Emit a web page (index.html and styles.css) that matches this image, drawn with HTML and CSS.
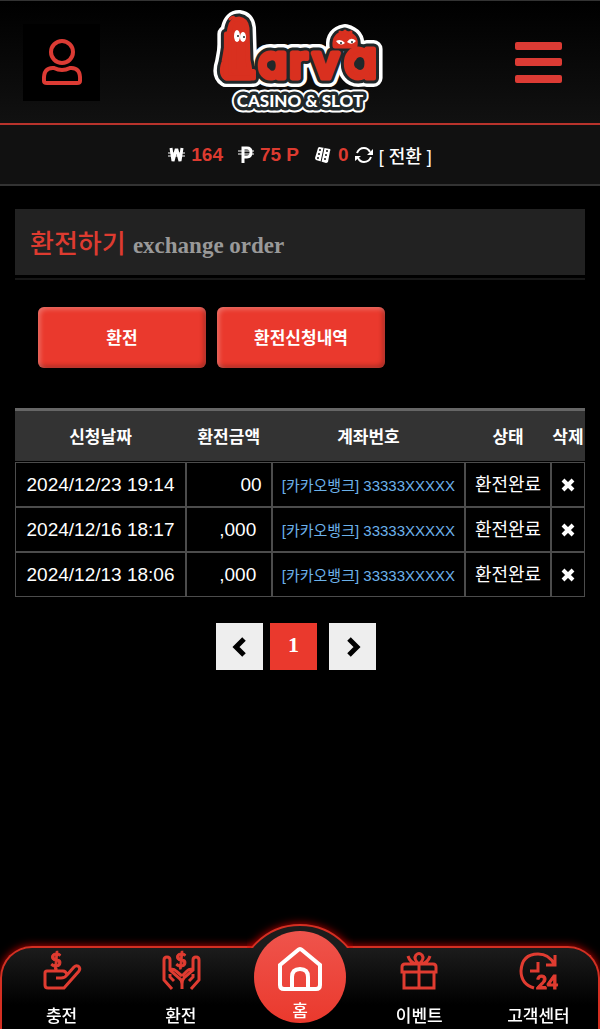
FILE: index.html
```
<!DOCTYPE html>
<html lang="ko">
<head>
    <meta charset="UTF-8">
    <meta name="viewport" content="width=device-width, initial-scale=1.0">
    <title>환전하기</title>
    <link rel="stylesheet" href="styles.css">
</head>
<body>

<header class="header">
    <a href="#" class="user-link" aria-label="내 정보">
        <svg width="42" height="48" viewBox="0 0 42 48">
            <circle cx="21" cy="14" r="11"/>
            <path d="M13 30 Q21 34 29 30 Q40 29 39 43 Q39 45 36 45 H6 Q3 45 3 43 Q2 29 13 30 Z"/>
        </svg>
    </a>
    <a href="#" class="logo">
        <svg width="172" height="110" viewBox="214 7 172 110">
            <g class="logo-white">
                <use href="#logo-word"/>
                <use href="#worm"/>
                <use href="#head"/>
            </g>
            <g class="logo-dark">
                <use href="#logo-word"/>
                <use href="#worm"/>
                <use href="#head"/>
            </g>
            <g class="logo-red">
                <path id="head" d="M335 46 Q334 35 345 33 Q357 36 355 46 Z"/>
                <path id="worm" d="M226 78 Q220 74 224 62 L230 28 Q232 19 239 19 Q246 20 247 28 L248 60 Q251 74 250 78 Z"/>
            </g>
            <g class="logo-red">
                <text id="logo-word" class="word" y="78"><tspan class="big-l" x="222">L</tspan><tspan x="258">a</tspan><tspan x="289">r</tspan><tspan x="312">v</tspan><tspan class="big-a" x="344">a</tspan></text>
            </g>
            <path class="antenna" d="M235 20 Q234 15 230 19"/>
            <path class="antenna" d="M345 33 V31 M342 33 L340 32 M349 33 L351 32"/>
            <ellipse class="eye" cx="237" cy="36" rx="3" ry="6"/>
            <ellipse class="eye" cx="243" cy="37" rx="3" ry="5"/>
            <circle class="pupil" cx="238" cy="36" r="1"/>
            <circle class="pupil" cx="244" cy="37" r="1"/>
            <path class="eye" d="M336 41 Q341 38 345 43 Q340 47 336 41 Z M347 42 Q351 36 356 41 Q352 46 347 42 Z"/>
            <circle class="pupil" cx="341" cy="43" r="1"/>
            <circle class="pupil" cx="352" cy="42" r="1"/>
            <circle class="pupil" cx="271" cy="65" r="4"/>
            <circle class="pupil" cx="359" cy="64" r="5"/>
            <use href="#logo-sub" class="sub-white"/>
            <use href="#logo-sub" class="sub-dark"/>
            <g class="sub-text">
                <text id="logo-sub" class="sub" x="300" y="107">CASINO &amp; SLOT</text>
            </g>
        </svg>
    </a>
    <button type="button" class="menu-icon" aria-label="메뉴">
        <span></span>
        <span></span>
        <span></span>
    </button>
</header>

<div class="balance">
    <svg class="won" width="17" height="18" viewBox="0 0 17 18"><path d="M3 2 L5 15 L8 4 H9 L12 15 L14 2"/><path class="bar" d="M0 7 H17 M0 10 H17"/></svg>
    <strong>164</strong>
    <svg class="point" width="16" height="18" viewBox="0 0 16 18"><path d="M5 17 V2 H9 Q13 2 13 6 Q13 11 9 11 H5"/><path class="bar" d="M0 5 H16 M0 8 H16"/></svg>
    <strong>75 P</strong>
    <svg class="dice" width="18" height="18" viewBox="0 0 18 18">
        <path d="M5 1 L16 3 Q17 4 16 5 L14 16 Q13 17 12 17 L2 14 Q1 13 1 12 L4 2 Z"/>
        <path class="dice-line" d="M10 2 L7 16"/>
        <g class="dots">
            <circle cx="6" cy="4" r="1"/><circle cx="5" cy="8" r="1"/><circle cx="4" cy="12" r="1"/>
            <circle cx="13" cy="5" r="1"/><circle cx="12" cy="9" r="1"/><circle cx="11" cy="13" r="1"/>
        </g>
    </svg>
    <strong>0</strong>
    <svg class="refresh" width="18" height="18" viewBox="0 0 18 18">
        <path d="M2 7 Q4 2 9 2 Q13 2 15 6 M16 11 Q14 16 9 16 Q5 16 3 12"/>
        <path class="tips" d="M18 3 V9 H12 Z M0 15 V10 H6 Z"/>
    </svg>
    <a href="#">[ 전환 ]</a>
</div>

<main class="content">
    <div class="title">
        <h1>환전하기 <small>exchange order</small></h1>
    </div>

    <div class="tabs">
        <button type="button">환전</button>
        <button type="button">환전신청내역</button>
    </div>

    <table class="list">
        <thead>
            <tr>
                <th class="col-date">신청날짜</th>
                <th class="col-amount">환전금액</th>
                <th class="col-account">계좌번호</th>
                <th class="col-state">상태</th>
                <th class="col-delete">삭제</th>
            </tr>
        </thead>
        <tbody>
            <tr>
                <td>2024/12/23 19:14</td>
                <td class="amount">00</td>
                <td class="account">[카카오뱅크] 33333XXXXX</td>
                <td class="state">환전완료</td>
                <td><button type="button" class="delete" aria-label="삭제"><svg width="14" height="14" viewBox="0 0 14 14"><path d="M2 2 L12 12 M12 2 L2 12"/></svg></button></td>
            </tr>
            <tr>
                <td>2024/12/16 18:17</td>
                <td class="amount">,000&nbsp;</td>
                <td class="account">[카카오뱅크] 33333XXXXX</td>
                <td class="state">환전완료</td>
                <td><button type="button" class="delete" aria-label="삭제"><svg width="14" height="14" viewBox="0 0 14 14"><path d="M2 2 L12 12 M12 2 L2 12"/></svg></button></td>
            </tr>
            <tr>
                <td>2024/12/13 18:06</td>
                <td class="amount">,000&nbsp;</td>
                <td class="account">[카카오뱅크] 33333XXXXX</td>
                <td class="state">환전완료</td>
                <td><button type="button" class="delete" aria-label="삭제"><svg width="14" height="14" viewBox="0 0 14 14"><path d="M2 2 L12 12 M12 2 L2 12"/></svg></button></td>
            </tr>
        </tbody>
    </table>

    <div class="paging">
        <a href="#" aria-label="이전"><svg width="14" height="20" viewBox="0 0 14 20"><path d="M11 2 L3 10 L11 18"/></svg></a>
        <a href="#" class="active">1</a>
        <a href="#" class="next" aria-label="다음"><svg width="14" height="20" viewBox="0 0 14 20"><path d="M3 2 L11 10 L3 18"/></svg></a>
    </div>
</main>

<nav class="bottom-nav">
    <a href="#">
        <svg width="38" height="38" viewBox="0 0 38 38">
            <path d="M13 26 H18 Q22 26 24 23 L31 15 Q33 13 35 14 Q38 16 36 19 L21 36 H5 Q2 36 2 33 V21 Q2 19 4 19 H20 Q23 19 24 23 M13 16 V19"/>
            <text x="13" y="15">$</text>
        </svg>
        <span>충전</span>
    </a>
    <a href="#">
        <svg width="38" height="38" viewBox="0 0 38 38">
            <path d="M10 37 L2 28 V8 Q2 5 5 5 Q8 5 8 8 V18 L17 26 Q20 28 20 32 V37 M8 22 V25 L12 29 M8 18 Q11 16 14 19 L20 24 M29 37 L37 28 V8 Q37 5 34 5 Q31 5 31 8 V18 L22 26 Q20 28 20 32 M31 22 V25 L27 29 M31 18 Q28 16 25 19 L20 24"/>
            <text x="19" y="15">$</text>
        </svg>
        <span>환전</span>
    </a>
    <a href="#" class="home">
        <span class="home-circle">
            <svg width="44" height="44" viewBox="0 0 44 44">
                <path d="M2 18 L20 3 Q22 1 24 3 L42 18 V38 Q42 42 38 42 H6 Q2 42 2 38 Z M14 42 V30 Q14 22 22 22 Q30 22 30 30 V42"/>
            </svg>
            <span>홈</span>
        </span>
    </a>
    <a href="#">
        <svg width="38" height="38" viewBox="0 0 38 38">
            <path d="M4 20 V36 H34 V20 M19 12 V36 M5 12 H33 Q36 12 36 15 V20 H2 V15 Q2 12 5 12 Z M17 12 Q10 11 8 4 M21 12 Q28 11 30 4 M19 12 Q13 7 16 3 Q19 0 22 3 Q25 7 19 12"/>
        </svg>
        <span>이벤트</span>
    </a>
    <a href="#">
        <svg width="38" height="38" viewBox="0 0 38 38">
            <path d="M15 36 Q2 32 2 19 Q3 2 19 2 Q30 2 35 12 M27 13 H36 V3 M19 10 V19 H11"/>
            <text x="28" y="37">24</text>
        </svg>
        <span>고객센터</span>
    </a>
</nav>

</body>
</html>
```
FILE: styles.css
```
* {
    box-sizing: border-box;
}
body {
    margin: 0;
    font-family: "Liberation Sans", "Noto Sans CJK KR", sans-serif;
    background-color: #000;
    color: #fff;
    min-height: 100vh;
    padding-bottom: 110px;
}
a {
    color: inherit;
    text-decoration: none;
}
button {
    border: 0;
    padding: 0;
    background: none;
    color: inherit;
    font-family: inherit;
    cursor: pointer;
}
svg {
    display: block;
    fill: none;
    overflow: visible;
}
.header {
    display: grid;
    grid-template-columns: 1fr auto 1fr;
    align-items: center;
    height: 125px;
    padding: 0 23px;
    background: linear-gradient(#000, #111);
    border-top: 1px solid #333;
    border-bottom: 2px solid #b8332c;
}
.user-link {
    display: flex;
    align-items: center;
    justify-content: center;
    width: 77px;
    height: 77px;
    background-color: #000;
}
.user-link svg {
    stroke: #dc3b34;
    stroke-width: 4;
}
.menu-icon {
    display: flex;
    flex-direction: column;
    justify-content: space-between;
    justify-self: end;
    width: 47px;
    height: 41px;
    margin-right: 15px;
}
.menu-icon span {
    height: 8px;
    border-radius: 2px;
    background-color: #dc3b34;
}

/* logo */
.word {
    font-family: Inter, sans-serif;
    font-size: 46px;
    font-weight: 600;
    font-feature-settings: "cv11";
}
.big-l {
    font-size: 60px;
}
.big-a {
    font-size: 53px;
}
.sub {
    font-family: "Liberation Sans Narrow", Lato, sans-serif;
    font-size: 17px;
    font-weight: 900;
    text-anchor: middle;
}
.logo svg {
    stroke-linejoin: round;
    stroke-linecap: round;
}
.logo-white {
    fill: #fff;
    stroke: #fff;
    stroke-width: 18;
}
.logo-dark {
    fill: #20282a;
    stroke: #20282a;
    stroke-width: 11;
}
.logo-red {
    fill: #d9301f;
    stroke: #d9301f;
    stroke-width: 5;
}
.antenna {
    stroke: #d9301f;
    stroke-width: 3;
}
.eye {
    fill: #fff;
}
.pupil {
    fill: #20282a;
}
.sub-white {
    fill: #fff;
    stroke: #fff;
    stroke-width: 11;
}
.sub-dark {
    fill: #20282a;
    stroke: #20282a;
    stroke-width: 7;
}
.sub-text {
    fill: #fff;
}

.balance {
    display: flex;
    align-items: center;
    justify-content: center;
    gap: 6px;
    height: 61px;
    background-color: #111;
    border-bottom: 2px solid #333;
    font-size: 19px;
}
.balance strong {
    color: #dd3b30;
}
.balance a {
    font-size: 18px;
    font-weight: 500;
}
.balance svg {
    stroke: #fff;
    stroke-width: 2;
}
.balance .won,
.balance .point {
    stroke-width: 3;
}
.balance .bar {
    stroke-width: 1;
}
.balance .point,
.balance .dice {
    margin-left: 9px;
}
.balance .dice {
    fill: #fff;
    stroke: none;
}
.dice .dice-line {
    stroke: #111;
    stroke-width: 1;
}
.dots {
    fill: #111;
}
.refresh .tips {
    fill: #fff;
    stroke: none;
}

.content {
    padding: 23px 15px 0;
}
.title {
    border-bottom: 2px solid #171717;
    padding-bottom: 3px;
}
.title h1 {
    height: 66px;
    margin: 0;
    padding: 2px 15px 0;
    background-color: #222;
    color: #dd3b30;
    font-size: 26px;
    font-weight: 500;
    line-height: 66px;
}
.title small {
    color: #999;
    font-family: "Liberation Serif", serif;
    font-size: 23px;
    font-weight: 700;
}
.tabs {
    display: flex;
    gap: 11px;
    padding: 27px 23px 40px;
}
.tabs button {
    width: 168px;
    height: 61px;
    padding-bottom: 3px;
    border-radius: 6px;
    background-color: #ea392d;
    box-shadow: inset 2px 2px 5px rgba(255, 255, 255, 0.3), inset -2px -2px 5px rgba(0, 0, 0, 0.3);
    font-size: 17px;
    font-weight: 700;
}

.list {
    width: 100%;
    table-layout: fixed;
    border-collapse: separate;
    border-spacing: 0;
}
.list th {
    height: 54px;
    padding: 0 0 2px;
    background-color: #333;
    background-clip: padding-box;
    border-top: 3px solid #666;
    border-bottom: 1px solid #000;
    font-size: 17px;
    font-weight: 700;
    white-space: nowrap;
}
.list td {
    height: 45px;
    padding: 0;
    border: 1px solid #4c4c4c;
    font-size: 19px;
    text-align: center;
    white-space: nowrap;
}
.col-date {
    width: 30%;
}
.col-account {
    width: 34%;
}
.col-state {
    width: 15%;
}
.col-delete {
    width: 6%;
}
.list .amount {
    padding-right: 9px;
    text-align: right;
}
.list .account {
    color: #6cb2eb;
    font-size: 15px;
}
.list .state {
    padding-bottom: 3px;
    font-size: 18px;
}
.delete {
    display: block;
    margin: 0 auto;
}
.delete path {
    stroke: #fff;
    stroke-width: 4;
}

.paging {
    display: flex;
    justify-content: center;
    gap: 7px;
    padding: 26px 8px 0 0;
}
.paging a {
    display: flex;
    align-items: center;
    justify-content: center;
    width: 47px;
    height: 47px;
    background-color: #eee;
    color: #fff;
    font-family: "Liberation Serif", serif;
    font-size: 22px;
    font-weight: 700;
}
.paging .active {
    padding-bottom: 3px;
    background-color: #ea392d;
}
.paging .next {
    margin-left: 5px;
}
.paging path {
    stroke: #000;
    stroke-width: 5;
}

.bottom-nav {
    position: fixed;
    left: 0;
    right: 0;
    bottom: 0;
    display: flex;
    height: 83px;
    border: 2px solid #d42f22;
    border-bottom: 0;
    border-radius: 32px 32px 0 0;
    background: linear-gradient(#1c1c1c, #000 70%);
    box-shadow: 0 0 8px #c00;
}
.bottom-nav a {
    flex: 1;
    display: flex;
    flex-direction: column;
    align-items: center;
    gap: 15px;
    padding-top: 4px;
    font-size: 17px;
    font-weight: 500;
    line-height: 24px;
}
.bottom-nav svg {
    stroke: #e03c31;
    stroke-width: 3;
}
.bottom-nav text {
    fill: #e03c31;
    stroke-width: 1;
    font-family: Lato, sans-serif;
    font-size: 19px;
    font-weight: 900;
    text-anchor: middle;
}
.bottom-nav .home {
    position: relative;
    padding: 0;
}
/* raised arc over the top edge of the bar */
.home::before {
    content: "";
    box-sizing: border-box;
    position: absolute;
    top: -24px;
    left: 50%;
    width: 126px;
    height: 126px;
    margin-left: -63px;
    border: 2px solid #d42f22;
    border-radius: 50%;
    background-color: #1c1c1c;
    box-shadow: 0 0 8px #c00;
    clip-path: inset(-20px 10px 102px);
}
.home-circle {
    position: absolute;
    top: -17px;
    display: flex;
    flex-direction: column;
    align-items: center;
    gap: 9px;
    width: 92px;
    height: 92px;
    padding-top: 16px;
    border-radius: 50%;
    background: linear-gradient(#ef544c, #ea392d);
}
.bottom-nav .home svg {
    stroke: #fff;
    stroke-width: 4;
}
```
